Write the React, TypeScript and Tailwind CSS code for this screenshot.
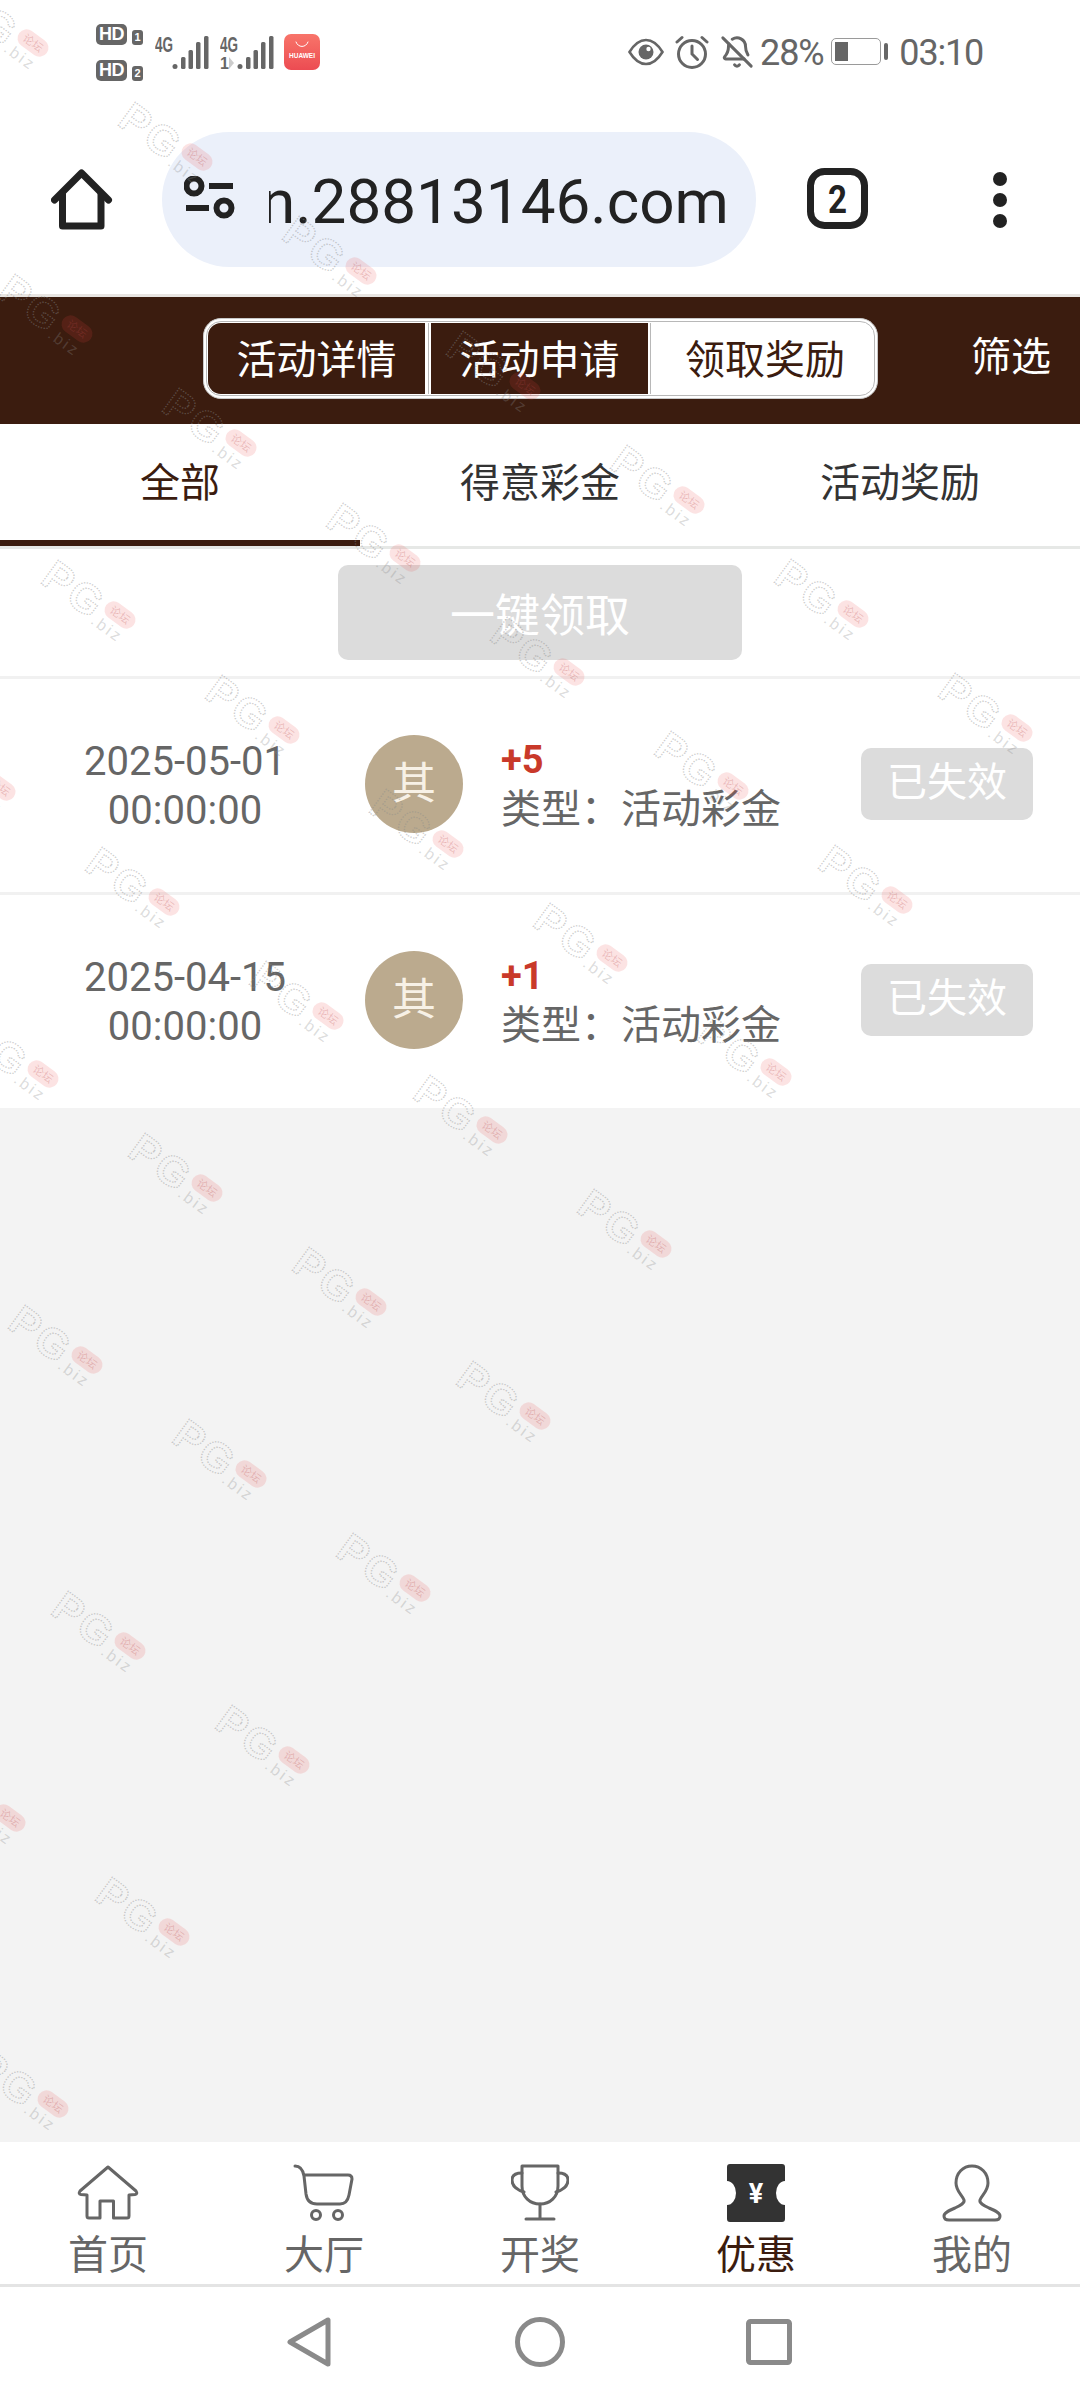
import React from "react";
import { BellOff } from "lucide-react";

const marks: { x: number; y: number }[] = [];
for (let i = 0; i <= 6; i++) {
  for (let j = 0; j <= 9; j++) {
    const x = 33 + i * 164 - j * 120.5;
    const y = 43 + i * 114.2 + j * 172;
    if (x > -60 && x < 1120 && y < 2135) marks.push({ x, y });
  }
}

function Watermark({ x, y }: { x: number; y: number }) {
  return (
    <svg
      className="absolute overflow-visible"
      width="1"
      height="1"
      style={{ left: x, top: y }}
    >
      <g transform="rotate(36)">
        <text
          x="-85"
          y="21"
          fontSize="42"
          fontWeight="700"
          fontFamily="'Liberation Sans', sans-serif"
          letterSpacing="3"
          fill="none"
          stroke="#8a8a8a"
          strokeOpacity="0.42"
          strokeWidth="1.4"
          strokeDasharray="1.4 1.4"
        >
          PG
        </text>
        <text
          x="-20"
          y="24"
          fontSize="16"
          fontFamily="'Liberation Sans', sans-serif"
          letterSpacing="2.5"
          fill="#8a8a8a"
          fillOpacity="0.3"
        >
          .biz
        </text>
        <rect x="-17" y="-9" width="34" height="18" rx="9" fill="#ee4444" fillOpacity="0.15" />
        <text
          x="-11"
          y="4"
          fontSize="11"
          fontFamily="'Noto Sans CJK SC', sans-serif"
          fill="#b84a4a"
          fillOpacity="0.28"
        >
          论坛
        </text>
      </g>
    </svg>
  );
}

function Bars({ withArrow }: { withArrow?: boolean }) {
  return (
    <svg width="54" height="34" viewBox="0 0 54 34">
      <text x="0" y="16" fontSize="22" fontWeight="700" fontFamily="'Liberation Sans', sans-serif" fill="#666" textLength="18" lengthAdjust="spacingAndGlyphs">
        4G
      </text>
      {withArrow && (
        <>
          <text x="0" y="33" fontSize="16" fontWeight="700" fontFamily="'Liberation Sans', sans-serif" fill="#666">
            1
          </text>
          <path d="M9 21 L14 27 L9 33 Z" fill="#ccc" />
        </>
      )}
      <circle cx="20" cy="30.5" r="2.5" fill="#666" />
      <rect x="26" y="21" width="4.5" height="12" rx="1.5" fill="#666" />
      <rect x="33.5" y="14" width="4.5" height="19" rx="1.5" fill="#666" />
      <rect x="41" y="6" width="4.5" height="27" rx="1.5" fill="#666" />
      <rect x="49" y="0" width="4.5" height="33" rx="1.5" fill="#666" />
    </svg>
  );
}

function Hd({ n }: { n: string }) {
  return (
    <div className="flex items-end gap-[5px]">
      <div className="w-[31px] h-[21px] rounded-[5px] bg-[#666] text-white text-[18px] leading-[21px] font-bold text-center tracking-[-0.5px]">
        HD
      </div>
      <div className="w-[11px] h-[15px] rounded-[3px] bg-[#666] text-white text-[11px] leading-[15px] font-bold text-center">
        {n}
      </div>
    </div>
  );
}

const TabIcon = {
  home: (
    <svg width="62" height="57" viewBox="-2 -2 62 57" fill="none" stroke="#666" strokeWidth="3" strokeLinejoin="round" strokeLinecap="round">
      <path d="M29 0 L1 24 Q-1 27 2 27.5 L8 28 V49 Q8 51 10 51 H21 V34 H34.5 V51 H48 Q50 51 50 49 V28 L56 27.5 Q59 27 57 24 Z" />
    </svg>
  ),
  cart: (
    <svg width="62" height="58" viewBox="0 0 62 58" fill="none" stroke="#666" strokeWidth="3" strokeLinecap="round">
      <path d="M2 2 C8 2 10 6 11 12 L13 30 C14 37 18 40 24 40 H47 C52 40 55 36 56 31 L59 15 Q59 11 55 11 H12" />
      <circle cx="23" cy="51" r="4.5" />
      <circle cx="45" cy="51" r="4.5" />
    </svg>
  ),
  trophy: (
    <svg width="58" height="58" viewBox="0 0 58 58" fill="none" stroke="#666" strokeWidth="3" strokeLinecap="round" strokeLinejoin="round">
      <path d="M11 2 H47 V22 C47 33 39 40 29 40 C19 40 11 33 11 22 Z" />
      <path d="M11 9 C4 9 1 12 1 16 C1 22 6 26 13 28" />
      <path d="M47 9 C54 9 57 12 57 16 C57 22 52 26 45 28" />
      <path d="M29 40 V55 M15 55 H43" />
    </svg>
  ),
  ticket: (
    <svg width="58" height="58" viewBox="0 0 58 58">
      <path d="M3 0 H55 a3 3 0 0 1 3 3 V17 a9 12 0 0 0 0 24 V55 a3 3 0 0 1 -3 3 H3 a3 3 0 0 1 -3 -3 V41 a9 12 0 0 0 0 -24 V3 a3 3 0 0 1 3 -3 Z" fill="#333" />
      <text x="29" y="39" textAnchor="middle" fontSize="27" fontWeight="700" fontFamily="Roboto, sans-serif" fill="#fff">
        ¥
      </text>
    </svg>
  ),
  user: (
    <svg width="60" height="58" viewBox="0 0 60 58" fill="none" stroke="#666" strokeWidth="3" strokeLinejoin="round">
      <path d="M30 2 C21 2 14 9 14 19 C14 27 20 31 22 36 C23 39 19 41 13 44 C6 47 2 49 2 52 C2 54.5 4 56 7 56 H53 C56 56 58 54.5 58 52 C58 49 54 47 47 44 C41 41 37 39 38 36 C40 31 46 27 46 19 C46 9 39 2 30 2 Z" />
    </svg>
  ),
};

const tabs = [
  { label: "首页", icon: TabIcon.home },
  { label: "大厅", icon: TabIcon.cart },
  { label: "开奖", icon: TabIcon.trophy },
  { label: "优惠", icon: TabIcon.ticket, active: true },
  { label: "我的", icon: TabIcon.user },
];

const rows = [
  { date: "2025-05-01", amount: "+5" },
  { date: "2025-04-15", amount: "+1" },
];

export default function App() {
  return (
    <div className="relative w-[1080px] h-[2400px] overflow-hidden bg-white flex flex-col [font-family:Roboto,'Noto_Sans_CJK_SC',sans-serif]">
      {/* status bar */}
      <div className="h-[120px] shrink-0 flex justify-between pl-[96px] pr-[97px] text-[#666]">
        <div className="flex items-start pt-[24px]">
          <div className="flex flex-col gap-[15px] [font-family:'Liberation_Sans',sans-serif]">
            <Hd n="1" />
            <Hd n="2" />
          </div>
          <div className="ml-[12px] mt-[12px]">
            <Bars />
          </div>
          <div className="ml-[11px] mt-[12px]">
            <Bars withArrow />
          </div>
          <div className="ml-[10px] mt-[10px] w-[36px] h-[36px] rounded-[7px] bg-gradient-to-b from-[#f8746a] to-[#ec4b52] flex flex-col items-center">
            <svg width="14" height="8" viewBox="0 0 14 8" className="mt-[7px]" fill="none" stroke="#fff" strokeWidth="1" strokeLinecap="round">
              <path d="M1 1 C3 7 11 7 13 1" />
            </svg>
            <span className="text-[6.5px] leading-[8px] mt-[3px] text-white font-bold [font-family:'Liberation_Sans',sans-serif]">HUAWEI</span>
          </div>
        </div>
        <div className="flex items-start pt-[34px] h-fit">
          <svg width="36" height="28" viewBox="0 0 36 28" className="mt-[4px]" fill="none" stroke="#666">
            <path d="M1.5 14 C7 5 12 2 18 2 C24 2 29 5 34.5 14 C29 23 24 26 18 26 C12 26 7 23 1.5 14 Z" strokeWidth="2.6" />
            <circle cx="18" cy="14" r="7.5" fill="#666" stroke="none" />
            <circle cx="20.5" cy="11" r="2.2" fill="#fff" stroke="none" />
          </svg>
          <svg width="34" height="34" viewBox="0 0 34 34" className="ml-[11px] mt-[1px]" fill="none" stroke="#666" strokeWidth="3" strokeLinecap="round">
            <circle cx="17" cy="19" r="13.5" />
            <path d="M17 11 V19 L22.5 24.5" />
            <path d="M2 7 L7 2.5 M32 7 L27 2.5" />
          </svg>
          <BellOff size={34} color="#666" strokeWidth={2.1} className="ml-[11px] mt-[1px]" />
          <span className="ml-[6px] text-[36px] leading-[36px] mt-[1px] tracking-[-1.2px]">28%</span>
          <div className="ml-[8px] mt-[4px] flex items-center">
            <div className="w-[50px] h-[27px] rounded-[5px] border-[1.5px] border-[#9a9a9a] p-[3px]">
              <div className="w-[13px] h-full bg-[#666]" />
            </div>
            <div className="ml-[3px] w-[4px] h-[17px] rounded-[2px] bg-[#666]" />
          </div>
          <span className="ml-[11px] text-[36px] leading-[36px] mt-[1px] tracking-[-1.2px]">03:10</span>
        </div>
      </div>

      {/* browser bar */}
      <div className="h-[174px] shrink-0 flex items-start">
        <svg width="62" height="62" viewBox="0 0 62 62" className="ml-[51px] mt-[49px]" fill="none" stroke="#222" strokeWidth="7" strokeLinecap="round" strokeLinejoin="round">
          <path d="M3.5 31 L30.5 4 L57.5 31" />
          <path d="M11.5 25 V57 H50 V25" />
        </svg>
        <div className="ml-[49px] mt-[12px] w-[594px] h-[135px] rounded-full bg-[#ebf0fa] flex items-center overflow-hidden">
          <svg width="56" height="48" viewBox="0 0 56 48" className="ml-[22px] shrink-0" fill="none" stroke="#222" strokeWidth="6">
            <circle cx="10" cy="10" r="7.5" />
            <path d="M25 10 H49" />
            <path d="M2 32 H25" />
            <circle cx="40" cy="32" r="7.5" />
          </svg>
          <div className="ml-[29px] flex-1 min-w-0 overflow-hidden mt-[4px]">
            <div className="-ml-[8px] text-[62px] leading-[72px] text-[#222] whitespace-nowrap">n.28813146.com</div>
          </div>
        </div>
        <svg width="62" height="62" viewBox="0 0 62 62" className="ml-[51px] mt-[48px]">
          <rect x="3.5" y="3.5" width="54" height="54" rx="14" fill="none" stroke="#222" strokeWidth="7" />
          <text x="30.5" y="45" textAnchor="middle" fontSize="39" fontWeight="700" fontFamily="Roboto, sans-serif" fill="#222" textLength="19" lengthAdjust="spacingAndGlyphs">
            2
          </text>
        </svg>
        <div className="ml-[124px] mt-[52px] flex flex-col gap-[7px]">
          <div className="w-[14px] h-[14px] rounded-full bg-[#222]" />
          <div className="w-[14px] h-[14px] rounded-full bg-[#222]" />
          <div className="w-[14px] h-[14px] rounded-full bg-[#222]" />
        </div>
      </div>
      <div className="h-[3px] shrink-0 bg-[#e8e5e2]" />

      {/* header */}
      <div className="h-[127px] shrink-0 bg-[#3b1c0f] flex items-start text-[40px] leading-[48px]">
        <div className="ml-[203px] mt-[21px] w-[675px] h-[81px] rounded-[18px] bg-white border border-[#c8c8c8] p-[2px]">
          <div className="h-full rounded-[15px] border border-[#b8b8b8] p-[1px] flex">
            <div className="w-[221px] pr-[3px] border-r border-[#b8b8b8]">
              <div className="h-full rounded-l-[13px] bg-[#3b1c0f] text-white flex items-center justify-center pt-[4px]">活动详情</div>
            </div>
            <div className="w-[222px] pl-[2px] pr-[2px] border-r border-[#b8b8b8]">
              <div className="h-full bg-[#3b1c0f] text-white flex items-center justify-center pt-[4px]">活动申请</div>
            </div>
            <div className="flex-1 pl-[6px] text-[#3b1c0f] flex items-center justify-center pt-[4px]">领取奖励</div>
          </div>
        </div>
        <div className="ml-[93px] mt-[37px] text-white">筛选</div>
      </div>

      {/* tabs */}
      <div className="h-[125px] shrink-0 flex border-b-[3px] border-[#e6e8e6] text-[40px] text-[#333]">
        <div className="flex-1 h-[122px] border-b-[6px] border-[#3b1c0f] flex items-center justify-center pt-[4px] text-[#3b1c0f]">全部</div>
        <div className="flex-1 flex items-center justify-center pb-[2px]">得意彩金</div>
        <div className="flex-1 flex items-center justify-center pb-[2px]">活动奖励</div>
      </div>

      {/* one click */}
      <div className="h-[130px] shrink-0 flex justify-center pt-[16px] border-b-[3px] border-[#f1f1f1]">
        <div className="w-[404px] h-[95px] rounded-[10px] bg-[#dcdcdc] text-white text-[45px] flex items-center justify-center pt-[8px]">一键领取</div>
      </div>

      {/* rows */}
      {rows.map((r, i) => (
        <div
          key={r.date}
          className={`shrink-0 flex items-center bg-white ${i === 0 ? "h-[216px] border-b-[3px] border-[#f1f1f1]" : "h-[213px]"}`}
        >
          <div className="w-[365px] pl-[5px] text-center text-[40px] leading-[49px] text-[#666]">
            <div>{r.date}</div>
            <div>00:00:00</div>
          </div>
          <div className="w-[98px] h-[98px] mb-[4px] rounded-full bg-[#bbaa8e] text-[#f7f1e6] text-[44px] flex items-center justify-center">其</div>
          <div className="ml-[38px] w-[360px]">
            <div className="-mt-[2px] mb-[2px] text-[38px] leading-[48px] font-bold text-[#c9392a]">{r.amount}</div>
            <div className="text-[40px] leading-[48px] text-[#666]">类型：活动彩金</div>
          </div>
          <div className="w-[172px] h-[72px] mb-[3px] pb-[2px] rounded-[10px] bg-[#dcdcdc] text-white text-[40px] flex items-center justify-center">已失效</div>
        </div>
      ))}

      <div className="flex-1 bg-[#f3f3f3]" />

      {/* bottom tab bar */}
      <div className="h-[142px] shrink-0 flex bg-white">
        {tabs.map((t) => (
          <div key={t.label} className="flex-1 flex flex-col items-center pt-[22px]">
            <div className="h-[58px] flex items-center justify-center">{t.icon}</div>
            <div className={`mt-[10px] text-[40px] leading-[48px] ${t.active ? "text-[#3b1c0f]" : "text-[#666]"}`}>{t.label}</div>
          </div>
        ))}
      </div>
      <div className="h-[3px] shrink-0 bg-[#e4e4e4]" />

      {/* nav bar */}
      <div className="flex-none h-[113px] flex items-start pl-[287px]">
        <svg width="44" height="50" viewBox="0 0 44 50" className="mt-[30px]" fill="none" stroke="#8a8a8a" strokeWidth="5" strokeLinejoin="round">
          <path d="M3 25 L41 3 V47 Z" />
        </svg>
        <svg width="50" height="50" viewBox="0 0 50 50" className="mt-[30px] ml-[184px]" fill="none" stroke="#8a8a8a" strokeWidth="5">
          <circle cx="25" cy="25" r="22.5" />
        </svg>
        <svg width="46" height="46" viewBox="0 0 46 46" className="mt-[32px] ml-[181px]" fill="none" stroke="#8a8a8a" strokeWidth="5" strokeLinejoin="round">
          <rect x="2.5" y="2.5" width="41" height="41" rx="2" />
        </svg>
      </div>

      {/* watermark overlay */}
      <div className="absolute left-0 top-0 w-[1080px] h-[2142px] overflow-hidden pointer-events-none">
        {marks.map((m) => (
          <Watermark key={`${m.x}-${m.y}`} x={m.x} y={m.y} />
        ))}
      </div>
    </div>
  );
}
